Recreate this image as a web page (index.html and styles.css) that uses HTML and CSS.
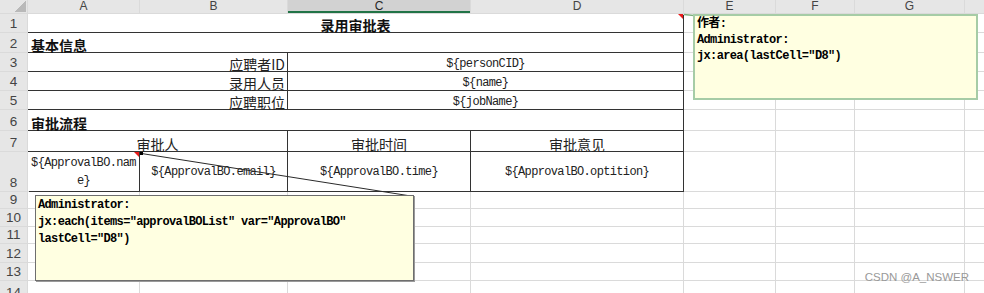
FILE: index.html
```html
<!DOCTYPE html>
<html lang="zh-CN">
<head>
<meta charset="utf-8">
<title>录用审批表</title>
<link rel="stylesheet" href="styles.css">
</head>
<body>
<div class="sheet">
  <div class="grid">
    <div class="corner"><span class="corner-tri"></span></div>
    <div class="ch">A</div>
    <div class="ch">B</div>
    <div class="ch sel">C</div>
    <div class="ch">D</div>
    <div class="ch">E</div>
    <div class="ch">F</div>
    <div class="ch">G</div>
    <div class="ch"></div>

    <div class="table">
      <div class="t title span4 note">录用审批表</div>
      <div class="t section span4">基本信息</div>
      <div class="t label span2">应聘者ID</div>
      <div class="t val span2">${personCID}</div>
      <div class="t label span2">录用人员</div>
      <div class="t val span2">${name}</div>
      <div class="t label span2">应聘职位</div>
      <div class="t val span2">${jobName}</div>
      <div class="t section span4">审批流程</div>
      <div class="t head span2">审批人</div>
      <div class="t head">审批时间</div>
      <div class="t head">审批意见</div>
      <div class="t tpl note">${ApprovalBO.name}</div>
      <div class="t tpl">${ApprovalBO.email}</div>
      <div class="t tpl">${ApprovalBO.time}</div>
      <div class="t tpl">${ApprovalBO.optition}</div>
    </div>

    <div class="rh">1</div><div class="c"></div><div class="c"></div><div class="c"></div><div class="c"></div>
    <div class="rh">2</div><div class="c"></div><div class="c"></div><div class="c"></div><div class="c"></div>
    <div class="rh">3</div><div class="c"></div><div class="c"></div><div class="c"></div><div class="c"></div>
    <div class="rh">4</div><div class="c"></div><div class="c"></div><div class="c"></div><div class="c"></div>
    <div class="rh">5</div><div class="c"></div><div class="c"></div><div class="c"></div><div class="c"></div>
    <div class="rh">6</div><div class="c"></div><div class="c"></div><div class="c"></div><div class="c"></div>
    <div class="rh">7</div><div class="c"></div><div class="c"></div><div class="c"></div><div class="c"></div>
    <div class="rh">8</div><div class="c"></div><div class="c"></div><div class="c"></div><div class="c"></div>
    <div class="rh">9</div><div class="c"></div><div class="c"></div><div class="c"></div><div class="c"></div><div class="c"></div><div class="c"></div><div class="c"></div><div class="c"></div>
    <div class="rh">10</div><div class="c"></div><div class="c"></div><div class="c"></div><div class="c"></div><div class="c"></div><div class="c"></div><div class="c"></div><div class="c"></div>
    <div class="rh">11</div><div class="c"></div><div class="c"></div><div class="c"></div><div class="c"></div><div class="c"></div><div class="c"></div><div class="c"></div><div class="c"></div>
    <div class="rh">12</div><div class="c"></div><div class="c"></div><div class="c"></div><div class="c"></div><div class="c"></div><div class="c"></div><div class="c"></div><div class="c"></div>
    <div class="rh">13</div><div class="c"></div><div class="c"></div><div class="c"></div><div class="c"></div><div class="c"></div><div class="c"></div><div class="c"></div><div class="c"></div>
    <div class="rh">14</div><div class="c"></div><div class="c"></div><div class="c"></div><div class="c"></div><div class="c"></div><div class="c"></div><div class="c"></div><div class="c"></div>
  </div>

  <svg class="links" width="984" height="293" viewBox="0 0 984 293">
    <line x1="141.5" y1="153.5" x2="414" y2="196.5" stroke="#2a2a2a" stroke-width="1"/>
    <rect x="140" y="152" width="3" height="3" fill="#000"/>
    <line x1="684" y1="14.5" x2="694" y2="15.5" stroke="#7fb07f" stroke-width="1.5"/>
  </svg>

  <div class="comment comment-author">
    <div>作者:</div>
    <div>Administrator:</div>
    <div>jx:area(lastCell="D8")</div>
  </div>

  <div class="comment comment-each">
    <div>Administrator:</div>
    <div>jx:each(items="approvalBOList" var="ApprovalBO" lastCell="D8")</div>
  </div>

  <div class="wm">CSDN @A_NSWER</div>
</div>
</body>
</html>
```

FILE: styles.css
```css
* { box-sizing: border-box; }

html, body {
  margin: 0;
  padding: 0;
  background: #fff;
  overflow: hidden;
}

body {
  width: 984px;
  height: 293px;
}

.sheet {
  position: relative;
  width: 984px;
  height: 293px;
  overflow: hidden;
}

.grid {
  display: grid;
  grid-template-columns: 27px 111px 147px 182px 212px 91px 78px 109px 1fr;
  grid-template-rows: 13px 18px 19px 18px 18px 18px 20px 20px 39px 16px 17px 16px 18px 17px 20px;
  gap: 1px;
  background: #dadada;
  width: 984px;
}

.c { background: #fff; }

.corner {
  background: #e6e6e6;
  display: flex;
  justify-content: flex-end;
  align-items: flex-end;
  padding: 0 1px 1px 0;
}

.corner-tri {
  width: 11px;
  height: 11px;
  background: linear-gradient(135deg, transparent 50%, #b9b9b9 50%);
}

.ch {
  background: #e6e6e6;
  font-family: "Liberation Sans", Arial, sans-serif;
  font-size: 12px;
  line-height: 13px;
  color: #444;
  text-align: center;
}

.ch.sel {
  background: #d2d2d2;
  box-shadow: inset 0 -2px 0 #217346;
  color: #262626;
}

.rh {
  background: #e6e6e6;
  font-family: "Liberation Sans", Arial, sans-serif;
  font-size: 13.5px;
  line-height: 17px;
  color: #444;
  display: flex;
  align-items: flex-end;
  justify-content: center;
}

.table {
  grid-column: 2 / 6;
  grid-row: 2 / 10;
  display: grid;
  grid-template-columns: 111px 147px 182px 212px;
  grid-template-rows: 18px 19px 18px 18px 18px 20px 20px 39px;
  gap: 1px;
  background: #333;
  box-shadow: 1px 1px 0 #333;
}

.t {
  background: #fff;
  display: flex;
  align-items: flex-end;
  font-family: "Noto Sans CJK SC", sans-serif;
  font-size: 14px;
  line-height: 14px;
  color: #111;
  position: relative;
}

.span4 { grid-column: span 4; }
.span2 { grid-column: span 2; }

.title {
  justify-content: center;
  font-weight: 700;
}

.section {
  padding-left: 3px;
  font-weight: 700;
}

.label {
  justify-content: flex-end;
  padding-right: 2px;
  color: #222;
}

.head {
  justify-content: center;
  color: #222;
}

.val {
  justify-content: center;
  font-family: "Liberation Mono", "Noto Sans CJK SC", monospace;
  font-size: 12px;
  letter-spacing: -0.65px;
  color: #222;
}

.tpl {
  justify-content: center;
  align-items: center;
  text-align: center;
  font-family: "Liberation Mono", "Noto Sans CJK SC", monospace;
  font-size: 12px;
  line-height: 18px;
  letter-spacing: -0.65px;
  word-break: break-all;
  padding: 0 2px;
  color: #222;
}

.note::after {
  content: "";
  position: absolute;
  top: 0;
  right: 0;
  border-top: 5px solid #e81b1b;
  border-left: 5px solid transparent;
}

.links {
  position: absolute;
  left: 0;
  top: 0;
  pointer-events: none;
}

.comment {
  position: absolute;
  background: #ffffe1;
  font-family: "Liberation Mono", "Noto Sans CJK SC", monospace;
  font-weight: 700;
  font-size: 12px;
  letter-spacing: -0.65px;
  color: #000;
}

.comment-author {
  left: 693px;
  top: 14px;
  width: 285px;
  height: 86px;
  border: 2px solid #a6cca6;
  padding: 0 2px;
  line-height: 16px;
}

.comment-each {
  left: 35px;
  top: 195px;
  width: 379px;
  height: 86px;
  border: 1px solid #6e6e6e;
  box-shadow: 1px 1px 0 #9a9a9a;
  padding: 1px 2px;
  line-height: 17px;
}

.wm {
  position: absolute;
  right: 15px;
  top: 270px;
  font-family: "Liberation Sans", Arial, sans-serif;
  font-size: 11.5px;
  line-height: 14px;
  color: #999;
}
```
